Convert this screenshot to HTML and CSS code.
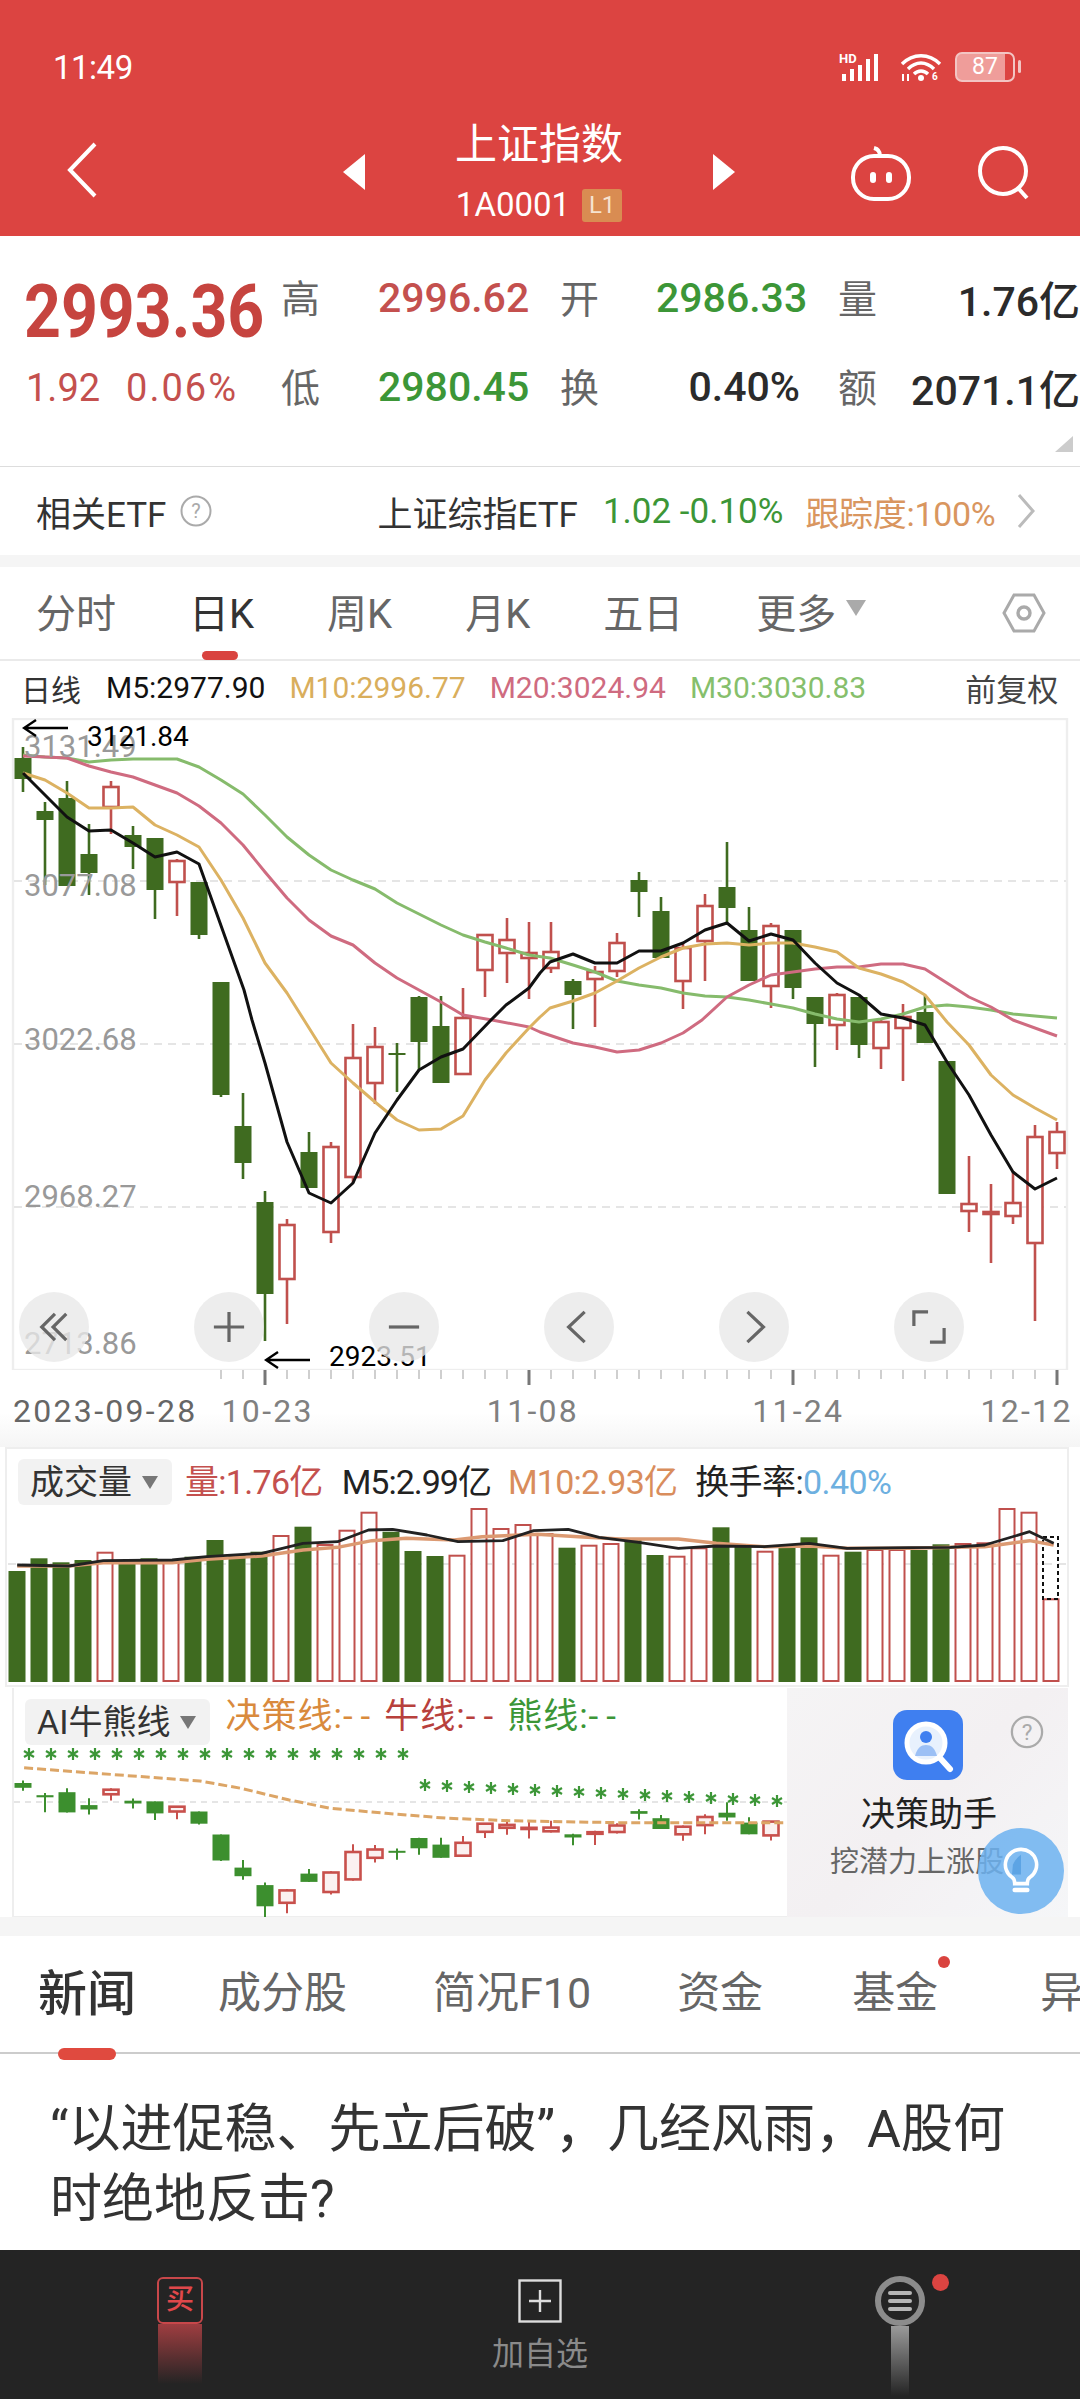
FILE: index.html
```html
<!DOCTYPE html>
<html lang="zh-CN">
<head>
<meta charset="utf-8">
<title>上证指数</title>
<link rel="stylesheet" href="styles.css">
</head>
<body>
<div class="page">
  <header class="hero">
    <div class="status">
      <span class="clock">11:49</span>
      <div class="status-icons">
        <svg class="sig" viewBox="0 0 48 30"><text x="0" y="11" class="hd">HD</text><rect x="3" y="22" width="4" height="7"/><rect x="11" y="17" width="4" height="12"/><rect x="19" y="13" width="4" height="16"/><rect x="27" y="7" width="4" height="22"/><rect x="35" y="2" width="4" height="27"/></svg>
        <svg class="wifi" viewBox="0 0 44 30"><path d="M3 12C14 1 30 1 41 12M9 17C17 9 27 9 35 17M15 22C19 18 25 18 29 22" fill="none" stroke="#fff" stroke-width="3.4"/><circle cx="22" cy="26" r="3" fill="#fff"/><text x="33" y="28" class="wifi-six">6</text><path d="M4 22v7M9 22v7" stroke="#fff" stroke-width="2"/></svg>
        <div class="batt"><span>87</span></div>
      </div>
    </div>
    <div class="titlebar">
      <svg class="back" viewBox="0 0 32 56"><path d="M29 2 4 28l25 26" fill="none" stroke="#fff" stroke-width="4"/></svg>
      <div class="stock-nav">
        <svg class="tri" viewBox="0 0 22 36"><path d="M22 0v36L0 18z" fill="#fff"/></svg>
        <div class="stock-name">
          <div class="stock-title">上证指数</div>
          <div class="stock-code">1A0001<span class="lv">L1</span></div>
        </div>
        <svg class="tri" viewBox="0 0 22 36"><path d="M0 0v36l22-18z" fill="#fff"/></svg>
      </div>
      <div class="top-actions">
        <svg class="robot" viewBox="0 0 62 58"><g fill="none" stroke="#fff" stroke-width="4"><rect x="3" y="13" width="56" height="43" rx="21"/><path d="M30 13C30 8 28 6 24 5"/></g><rect x="20" y="29" width="6" height="11" rx="3" fill="#fff"/><rect x="36" y="29" width="6" height="11" rx="3" fill="#fff"/></svg>
        <svg class="search" viewBox="0 0 54 54"><circle cx="25" cy="25" r="23" fill="none" stroke="#fff" stroke-width="4"/><path d="m40 42 9 10" stroke="#fff" stroke-width="4"/></svg>
      </div>
    </div>
  </header>

  <section class="quote">
    <div class="last-price"><span>2993.36</span></div>
    <span class="q-label">高</span><span class="q-val up">2996.62</span>
    <span class="q-label">开</span><span class="q-val down">2986.33</span>
    <span class="q-label">量</span><span class="q-val end">1.76亿</span>
    <div class="change"><span>1.92</span><span class="pct">0.06%</span></div>
    <span class="q-label">低</span><span class="q-val down">2980.45</span>
    <span class="q-label">换</span><span class="q-val flat">0.40%</span>
    <span class="q-label">额</span><span class="q-val end">2071.1亿</span>
    <svg class="corner" viewBox="0 0 18 16"><path d="M18 0v16H0z" fill="#ccc"/></svg>
  </section>

  <section class="etf">
    <span class="etf-label">相关ETF</span>
    <svg class="help" viewBox="0 0 32 32"><circle cx="16" cy="16" r="14.5" fill="none" stroke="#aaa" stroke-width="2"/><text x="16" y="23" class="help-q">?</text></svg>
    <span class="etf-name">上证综指ETF</span>
    <span class="etf-quote">1.02 -0.10%</span>
    <span class="etf-track">跟踪度:100%</span>
    <svg class="etf-more" viewBox="0 0 18 36"><path d="M2 2l14 16L2 34" fill="none" stroke="#bbb" stroke-width="3"/></svg>
  </section>

  <div class="band band-a"></div>

  <nav class="periods">
    <span>分时</span>
    <span class="on">日K</span>
    <span>周K</span>
    <span>月K</span>
    <span>五日</span>
    <span>更多</span>
    <svg class="more-tri" viewBox="0 0 20 16"><path d="M0 0h20L10 16z" fill="#aaa"/></svg>
    <svg class="hex" viewBox="0 0 44 40"><path d="M12 2h20l10 18-10 18H12L2 20z" fill="none" stroke="#aaa" stroke-width="3"/><circle cx="22" cy="20" r="6" fill="none" stroke="#aaa" stroke-width="3.4"/></svg>
  </nav>

  <div class="legend">
    <span class="lg-kind">日线</span>
    <span class="m5">M5:2977.90</span>
    <span class="m10">M10:2996.77</span>
    <span class="m20">M20:3024.94</span>
    <span class="m30">M30:3030.83</span>
    <span class="lg-adj">前复权</span>
  </div>

  <section class="kline">
    <svg id="kline" class="fill-svg" viewBox="0 718 1080 652"></svg>
    <span class="yl yl1">3131.49</span>
    <span class="yl yl2">3077.08</span>
    <span class="yl yl3">3022.68</span>
    <span class="yl yl4">2968.27</span>
    <span class="yl yl5">2713.86</span>
    <div class="mark mark-hi"><svg viewBox="0 0 46 20"><path d="M46 10H2M14 2 2 10l12 8" fill="none" stroke="#000" stroke-width="2.4"/></svg><span>3121.84</span></div>
    <div class="mark mark-lo"><svg viewBox="0 0 46 20"><path d="M46 10H2M14 2 2 10l12 8" fill="none" stroke="#000" stroke-width="2.4"/></svg><span>2923.51</span></div>
    <div class="zoom-btns">
      <button class="zb"><svg viewBox="0 0 36 36"><path d="M19 4 5 18l14 14M31 4 17 18l14 14" fill="none" stroke="#666" stroke-width="3.4"/></svg></button>
      <button class="zb"><svg viewBox="0 0 36 36"><path d="M2 18h32M18 2v32" fill="none" stroke="#666" stroke-width="3.4"/></svg></button>
      <button class="zb"><svg viewBox="0 0 36 36"><path d="M2 18h32" fill="none" stroke="#666" stroke-width="3.4"/></svg></button>
      <button class="zb"><svg viewBox="0 0 36 36"><path d="M24 2 7 18l17 16" fill="none" stroke="#666" stroke-width="3.4"/></svg></button>
      <button class="zb"><svg viewBox="0 0 36 36"><path d="m11 2 17 16-17 16" fill="none" stroke="#666" stroke-width="3.4"/></svg></button>
      <button class="zb"><svg viewBox="0 0 36 36"><path d="M17 2H2v15M34 19v15H19" fill="none" stroke="#666" stroke-width="3.4"/></svg></button>
    </div>
  </section>

  <div class="axis">
    <svg id="ticks" class="ticks" viewBox="0 0 1080 18"></svg>
    <div class="dates">
      <span class="d-start">2023-09-28</span>
      <span class="d-a">10-23</span>
      <span class="d-b">11-08</span>
      <span class="d-b">11-24</span>
      <span class="d-c">12-12</span>
    </div>
  </div>

  <section class="volume">
    <svg id="volume" class="fill-svg" viewBox="0 1447 1080 241"></svg>
    <div class="ind-head vol-head">
      <span class="chip">成交量<i class="chip-tri"></i></span>
      <span class="v-amt">量:1.76亿</span>
      <span class="v-m5">M5:2.99亿</span>
      <span class="v-m10">M10:2.93亿</span>
      <span class="v-rate">换手率:<b>0.40%</b></span>
    </div>
  </section>

  <section class="ai">
    <div class="ai-plot">
      <svg id="aiplot" class="fill-svg" viewBox="0 1688 787 229"></svg>
      <div class="ind-head ai-head">
        <span class="chip">AI牛熊线<i class="chip-tri"></i></span>
        <span class="a-dec">决策线:<span class="dash">--</span></span>
        <span class="a-bull">牛线:<span class="dash">--</span></span>
        <span class="a-bear">熊线:<span class="dash">--</span></span>
      </div>
    </div>
    <aside class="assist">
      <svg class="assist-help" viewBox="0 0 36 36"><circle cx="18" cy="18" r="16" fill="none" stroke="#aaa" stroke-width="2.4"/><text x="18" y="26" class="help-q2">?</text></svg>
      <svg class="assist-icon" viewBox="0 0 70 70"><rect width="70" height="70" rx="14" fill="#3f7ff0"/><circle cx="33" cy="33" r="19" fill="#e8f1fd" stroke="#fff" stroke-width="5"/><circle cx="33" cy="27" r="6" fill="#3f7ff0"/><path d="M22 46c2-8 6-11 11-11s9 3 11 11" fill="#9cc0f5"/><path d="m47 48 10 11" stroke="#fff" stroke-width="6" stroke-linecap="round"/></svg>
      <div class="assist-title">决策助手</div>
      <div class="assist-sub">挖潜力上涨股</div>
      <div class="bulb">
        <svg viewBox="0 0 40 54"><path d="M20 3a17 17 0 0 0-10 31c3 2 3 4 3 7h14c0-3 0-5 3-7A17 17 0 0 0 20 3z" fill="none" stroke="#fff" stroke-width="4"/><path d="M13 48h14" stroke="#fff" stroke-width="5" stroke-linecap="round"/><path d="M11 20c3-6 6-9 9-11v22H10z" fill="#3f90d8" opacity=".55"/></svg>
      </div>
    </aside>
  </section>

  <div class="band band-b"></div>

  <nav class="news-tabs">
    <span class="on">新闻</span>
    <span>成分股</span>
    <span>简况F10</span>
    <span>资金</span>
    <span class="dotted">基金</span>
    <span class="last-tab">异</span>
  </nav>

  <article class="story">“以进促稳、先立后破”，几经风雨，A股何时绝地反击?</article>

  <footer class="dock">
    <div class="dock-item buy">
      <div class="buy-box">买</div>
      <div class="buy-glow"></div>
    </div>
    <div class="dock-item add">
      <svg class="add-box" viewBox="0 0 44 44"><rect x="1.5" y="1.5" width="41" height="41" fill="none" stroke="#ddd" stroke-width="2.4"/><path d="M22 11v22M11 22h22" stroke="#ddd" stroke-width="2.4"/></svg>
      <span>加自选</span>
    </div>
    <div class="dock-item menu">
      <div class="menu-ring"><i></i><i></i><i></i></div>
      <div class="menu-glow"></div>
      <span class="menu-dot"></span>
    </div>
  </footer>
</div>
<script src="chart.js"></script>
</body>
</html>
```

FILE: styles.css
```css
* { box-sizing: border-box; }
html, body { margin: 0; padding: 0; }
body {
  width: 1080px;
  height: 2400px;
  overflow: hidden;
  background: #fff;
  color: #333;
  font-family: Roboto, "Noto Sans CJK SC", sans-serif;
}
.page { width: 1080px; height: 2400px; overflow: hidden; }
svg { display: block; }
.fill-svg { position: absolute; left: 0; top: 0; width: 100%; height: 100%; }

/* top bar */
.hero { height: 236px; background: #dc4441; color: #fff; }
.status { height: 100px; padding: 34px 65px 0 53px; display: flex; justify-content: space-between; align-items: center; }
.clock { font-size: 33px; letter-spacing: -.5px; }
.status-icons { display: flex; align-items: center; gap: 12px; }
.sig { width: 48px; height: 30px; fill: #fff; }
.hd { font: 700 13px Roboto, sans-serif; }
.wifi { width: 44px; height: 30px; }
.wifi-six { font: 700 10px Roboto, sans-serif; fill: #fff; }
.batt { width: 60px; height: 30px; border: 2.5px solid #f3c5c3; border-radius: 7px; background: linear-gradient(90deg, #ef9d9a 85%, transparent 85%); text-align: center; font-size: 23px; line-height: 25px; color: #fff; position: relative; }
.batt::after { content: ""; position: absolute; right: -8px; top: 6px; width: 3px; height: 13px; background: #f3c5c3; border-radius: 2px; }
.titlebar { height: 136px; display: grid; grid-template-columns: 343px 392px 1fr; align-items: start; }
.back { width: 32px; height: 56px; margin: 42px 0 0 66px; }
.stock-nav { display: flex; justify-content: space-between; align-items: flex-start; }
.tri { width: 22px; height: 36px; margin-top: 54px; }
.stock-name { display: flex; flex-direction: column; align-items: center; }
.stock-title { font-size: 42px; line-height: 60px; margin-top: 15px; }
.stock-code { font-size: 33px; line-height: 44px; margin-top: 8px; display: flex; align-items: center; }
.lv { width: 40px; height: 33px; margin-left: 12px; background: #d98c52; border-radius: 3px; font-size: 24px; line-height: 33px; text-align: center; color: #f6e3d0; }
.top-actions { display: flex; align-items: flex-start; gap: 66px; padding-left: 115px; }
.robot { width: 62px; height: 58px; margin-top: 43px; }
.search { width: 54px; height: 54px; margin-top: 46px; }

/* quote block */
.quote { position: relative; height: 231px; padding: 18px 0 0 26px; border-bottom: 1px solid #ddd; display: grid; grid-template-columns: 255px 97px 182px 96px 182px 60px 1fr; grid-auto-rows: 89px; align-items: center; }
.last-price { color: #c6443f; font-weight: 700; font-size: 74px; line-height: 80px; margin: 26px 0 0 -2px; white-space: nowrap; }
.last-price span { display: inline-block; transform: scaleX(.87); transform-origin: left center; }
.change { display: flex; gap: 26px; font-size: 38px; color: #c4504e; }
.pct { letter-spacing: 2px; }
.q-label { font-size: 39px; color: #666; margin-top: -5px; }
.q-val { font-size: 41px; font-weight: 500; white-space: nowrap; margin-top: -2px; }
.q-val.up { color: #c4504e; }
.q-val.down { color: #3c9637; }
.q-val.flat { color: #2b2b2b; text-align: right; padding-right: 38px; }
.q-val.end { color: #2b2b2b; text-align: right; }
.corner { position: absolute; right: 7px; bottom: 14px; width: 18px; height: 16px; }

/* related ETF strip */
.etf { height: 88px; display: flex; align-items: center; font-size: 35px; color: #333; padding-left: 36px; white-space: nowrap; }
.help { width: 32px; height: 32px; margin-left: 14px; }
.help-q { font: 20px Roboto, sans-serif; fill: #aaa; text-anchor: middle; }
.etf-name { margin-left: 165px; }
.etf-quote { margin-left: 25px; color: #3c9637; }
.etf-track { margin-left: 22px; color: #d9965f; font-size: 34px; letter-spacing: -.3px; }
.etf-more { width: 18px; height: 36px; margin-left: 22px; }

.band { background: #f5f5f5; }
.band-a { height: 12px; }
.band-b { height: 19px; }

/* period tabs */
.periods { height: 94px; display: flex; align-items: center; padding: 0 0 4px 36px; gap: 73px; font-size: 40px; color: #666; border-bottom: 2px solid #eaeaea; position: relative; }
.periods .on { color: #333; position: relative; }
.periods .on::after { content: ""; position: absolute; left: 13px; bottom: -20px; width: 36px; height: 9px; border-radius: 5px; background: #d9433f; }
.more-tri { width: 20px; height: 16px; margin: -6px 0 0 -63px; }
.hex { position: absolute; left: 1002px; top: 26px; width: 44px; height: 40px; }

/* moving average legend */
.legend { height: 57px; padding: 0 0 4px 21px; display: flex; align-items: center; font-size: 30px; white-space: nowrap; }
.lg-kind { color: #333; margin-right: 25px; }
.m5 { color: #111; margin-right: 24px; }
.m10 { color: #d9ae5c; margin-right: 24px; }
.m20 { color: #cf6b80; margin-right: 24px; }
.m30 { color: #86bf6c; margin-right: 99px; }
.lg-adj { color: #444; font-size: 31px; }

/* candle chart */
.kline { position: relative; height: 652px; }
.yl { position: absolute; left: 24px; font-size: 31px; line-height: 36px; color: #999; }
.yl1 { top: 11px; }
.yl2 { top: 150px; }
.yl3 { top: 304px; }
.yl4 { top: 461px; }
.yl5 { top: 608px; }
.mark { position: absolute; display: flex; align-items: flex-start; font-size: 28px; line-height: 34px; color: #000; }
.mark svg { width: 46px; height: 20px; }
.mark-hi { left: 22px; top: 0; gap: 19px; }
.mark-hi span { margin-top: 2px; }
.mark-lo { left: 264px; top: 632px; gap: 19px; }
.mark-lo span { margin-top: -10px; }
.zoom-btns { position: absolute; left: 19px; top: 574px; display: flex; gap: 105px; }
.zb { width: 70px; height: 70px; padding: 0; border: 0; border-radius: 50%; background: rgba(232,232,232,.78); display: flex; align-items: center; justify-content: center; }
.zb svg { width: 34px; height: 34px; }

/* time axis */
.axis { height: 77px; background: linear-gradient(#fff 55%, #f5f5f5); }
.ticks { width: 1080px; height: 18px; }
.dates { display: flex; padding-left: 13px; margin-top: 5px; font-size: 32px; line-height: 36px; letter-spacing: 2.3px; color: #808080; white-space: nowrap; }
.d-start { color: #666; }
.d-a { margin-left: 24px; }
.d-b { margin-left: 173px; }
.d-c { margin-left: 136px; }

/* volume and indicator panels */
.volume { position: relative; height: 241px; }
.ind-head { position: absolute; display: flex; align-items: center; font-size: 34px; line-height: 46px; white-space: nowrap; }
.vol-head { left: 18px; top: 12px; }
.chip { height: 46px; padding: 0 14px 0 12px; background: #f2f2f2; border-radius: 6px; color: #333; display: flex; align-items: center; }
.chip-tri { width: 0; height: 0; margin: 0 0 0 10px; border: 8px solid transparent; border-top: 13px solid #777; border-bottom: 0; }
.v-amt { margin-left: 13px; color: #c4504e; letter-spacing: -.7px; }
.v-m5 { margin-left: 19px; color: #222; letter-spacing: -1px; }
.v-m10 { margin-left: 17px; color: #d98d5c; letter-spacing: -.8px; }
.v-rate { margin-left: 18px; color: #222; letter-spacing: -.6px; }
.v-rate b { font-weight: 400; color: #6db0e0; }
.ai { height: 229px; display: flex; }
.ai-plot { position: relative; width: 787px; }
.ai-head { left: 25px; top: 11px; }
.a-dec, .a-bull, .a-bear { font-size: 35px; letter-spacing: 1px; transform: translateY(-5px); }
.dash { letter-spacing: 8px; }
.a-dec { margin-left: 15px; color: #d98a3d; }
.a-bull { margin-left: 6px; color: #b8403c; }
.a-bear { margin-left: 6px; color: #3c9637; }
.assist { position: relative; flex: 1; margin-right: 12px; background: linear-gradient(135deg, #f5f4f5, #f3f0f2 50%, #f5f6f8); display: flex; flex-direction: column; align-items: center; padding: 22px 0 0 3px; }
.assist-icon { width: 70px; height: 70px; margin-left: -2px; }
.assist-help { position: absolute; left: 223px; top: 27px; width: 34px; height: 34px; }
.help-q2 { font: 24px Roboto, sans-serif; fill: #aaa; text-anchor: middle; }
.assist-title { margin-top: 10px; font-size: 34px; line-height: 48px; color: #222; }
.assist-sub { margin: 4px 0 0 -24px; font-size: 29px; line-height: 40px; color: #666; white-space: nowrap; }
.bulb { position: absolute; left: 191px; top: 140px; width: 86px; height: 86px; border-radius: 50%; background: rgba(108,178,240,.85); display: flex; align-items: center; justify-content: center; }
.bulb svg { width: 36px; height: 50px; }

/* news tabs */
.news-tabs { height: 118px; display: flex; align-items: center; padding: 0 0 10px 38px; gap: 86px; font-size: 43px; color: #666; border-bottom: 2px solid #ccc; white-space: nowrap; }
.news-tabs .on { font-size: 49px; font-weight: 500; color: #333; position: relative; margin-right: -4px; }
.news-tabs .on::after { content: ""; position: absolute; left: 20px; bottom: -35px; width: 58px; height: 12px; border-radius: 6px; background: #e04a3f; }
.dotted { position: relative; margin-left: 3px; }
.dotted::after { content: ""; position: absolute; right: -12px; top: -2px; width: 12px; height: 12px; border-radius: 50%; background: #d9433f; }
.last-tab { margin-left: 16px; }

/* headline */
.story { height: 196px; padding: 41px 60px 0 50px; font-size: 52px; line-height: 70px; color: #333; }

/* bottom dock */
.dock { height: 149px; background: #242424; display: grid; grid-template-columns: 360px 360px 360px; }
.dock-item { position: relative; display: flex; flex-direction: column; align-items: center; }
.buy { padding: 27px 0 0 0; }
.buy-box { width: 46px; height: 47px; border: 2.5px solid #c8474a; border-radius: 6px; color: #e0484b; font-size: 28px; line-height: 41px; text-align: center; font-weight: 500; }
.buy-glow { width: 44px; height: 60px; background: linear-gradient(rgba(200,70,74,.75), rgba(200,70,74,0)); }
.add { padding-top: 29px; font-size: 32px; color: #8a8a8a; }
.add-box { width: 44px; height: 44px; }
.add span { margin-top: 9px; line-height: 44px; }
.menu { padding: 26px 0 0 0; }
.menu-ring { width: 50px; height: 50px; border: 6px solid #8c8c8c; border-radius: 50%; display: flex; flex-direction: column; align-items: center; justify-content: center; gap: 4px; }
.menu-ring i { width: 24px; height: 4px; border-radius: 2px; background: #b5b5b5; }
.menu-glow { width: 18px; height: 70px; background: linear-gradient(#9a9a9a, rgba(154,154,154,0)); }
.menu-dot { position: absolute; left: 212px; top: 24px; width: 17px; height: 17px; border-radius: 50%; background: #dc4441; }
```

FILE: chart.js
```js
// Daily K-line, volume and AI indicator panels, drawn from the series below.
var RED = '#c0504d', GREEN = '#3f6b20';

// [open-side flag, body top, body bottom, wick top, wick bottom] in page pixels
var candles = [
  ['g',758,779,747,792],['g',811,820,802,885],['g',798,886,781,886],['g',854,873,824,895],
  ['r',787,807,781,834],['g',835,847,826,869],['g',838,890,838,919],['r',861,882,859,916],
  ['g',882,935,882,939],['g',982,1095,982,1097],['g',1126,1163,1093,1179],['g',1202,1294,1191,1341],
  ['r',1225,1279,1219,1324],['g',1152,1188,1132,1188],['r',1147,1232,1142,1243],['r',1058,1177,1024,1183],
  ['r',1047,1083,1027,1104],['g',1053,1055,1043,1092],['g',997,1042,996,1070],['g',1026,1083,996,1083],
  ['r',1018,1074,988,1074],['r',935,970,935,997],['r',940,953,918,983],['r',953,958,922,999],
  ['r',952,968,922,973],['g',981,995,979,1029],['r',972,979,966,1027],['r',943,971,933,977],
  ['g',880,892,872,917],['g',911,958,897,958],['r',948,981,943,1009],['r',906,941,894,981],
  ['g',887,908,842,922],['g',930,981,907,981],['r',926,986,923,1008],['g',930,988,930,999],
  ['g',997,1024,997,1067],['r',995,1025,993,1050],['g',997,1045,997,1058],['r',1022,1048,1020,1069],
  ['r',1017,1028,1004,1081],['g',1012,1043,995,1043],['g',1061,1194,1061,1194],['r',1204,1211,1156,1232],
  ['r',1212,1214,1184,1263],['r',1203,1216,1171,1224],['r',1137,1243,1125,1321],['r',1132,1153,1122,1169]
];

var m5 = [[23,773],[67,817],[89,831],[111,830],[133,843],[155,857],[177,852],[199,864],[244,990],[252,1020],[265,1063],[287,1142],[309,1193],[331,1203],[353,1183],[375,1133],[397,1100],[419,1070],[441,1057],[463,1049],[491,1020],[506,1005],[529,988],[540,973],[550,962],[573,954],[595,963],[617,963],[639,951],[661,951],[683,943],[705,930],[727,923],[749,941],[771,934],[793,940],[815,963],[837,983],[859,995],[881,1014],[903,1018],[925,1025],[947,1062],[969,1095],[991,1135],[1013,1172],[1035,1189],[1057,1178]];
var m10 = [[23,773],[45,780],[67,793],[89,808],[111,808],[133,807],[155,825],[177,835],[199,847],[221,880],[243,918],[265,963],[287,993],[304,1020],[331,1063],[353,1083],[375,1102],[397,1120],[419,1130],[441,1129],[463,1116],[485,1080],[506,1053],[529,1028],[540,1017],[550,1008],[573,1001],[595,993],[617,981],[639,968],[661,957],[683,948],[705,944],[727,943],[749,945],[771,943],[793,943],[815,947],[837,952],[859,968],[881,974],[903,982],[925,995],[947,1022],[969,1045],[991,1075],[1013,1095],[1035,1108],[1057,1120]];
var m20 = [[23,756],[67,758],[89,766],[111,772],[133,777],[155,785],[177,793],[199,806],[221,823],[243,845],[265,872],[287,898],[309,920],[331,936],[353,945],[375,963],[397,978],[419,990],[441,1002],[463,1015],[492,1020],[529,1027],[540,1032],[573,1043],[595,1047],[617,1052],[639,1050],[661,1043],[683,1033],[702,1020],[727,997],[749,985],[771,975],[793,972],[815,969],[837,967],[859,967],[881,964],[903,964],[925,969],[947,983],[969,997],[991,1007],[1013,1020],[1057,1036]];
var m30 = [[23,755],[45,757],[67,758],[89,762],[111,760],[133,759],[155,759],[177,759],[199,767],[221,780],[243,794],[265,815],[287,837],[309,855],[331,870],[353,880],[375,889],[397,903],[419,914],[441,925],[463,935],[485,942],[506,948],[529,955],[550,958],[573,965],[595,972],[617,981],[639,985],[661,988],[683,993],[705,996],[727,997],[749,1000],[771,1004],[793,1008],[815,1014],[837,1019],[859,1022],[881,1019],[903,1014],[925,1007],[947,1005],[969,1007],[991,1010],[1013,1014],[1035,1016],[1057,1018]];

function line(points, color, width, dash) {
  var d = points.map(function (p) { return p[0] + ',' + p[1]; }).join(' ');
  return '<polyline points="' + d + '" fill="none" stroke="' + color + '" stroke-width="' + width +
    '" stroke-linejoin="round"' + (dash ? ' stroke-dasharray="' + dash + '"' : '') + '/>';
}

function candle(x, c, map, up, down, hollow, wickW) {
  var col = c[0] === 'r' ? up : down;
  var top = map(c[1]), bottom = map(c[2]);
  var out = '<line x1="' + x + '" x2="' + x + '" y1="' + map(c[3]) + '" y2="' + map(c[4]) +
    '" stroke="' + col + '" stroke-width="' + wickW + '"/>';
  if (c[0] === 'r') {
    out += '<rect x="' + (x - 7.5) + '" y="' + top + '" width="15" height="' + Math.max(bottom - top, 1) +
      '" fill="' + hollow + '" stroke="' + col + '" stroke-width="2.6"/>';
  } else {
    out += '<rect x="' + (x - 8.5) + '" y="' + top + '" width="17" height="' + Math.max(bottom - top, 2) +
      '" fill="' + col + '"/>';
  }
  return out;
}

function same(y) { return y; }

// main price chart
var k = '<rect x="13" y="719" width="1054" height="651" fill="none" stroke="#eee" stroke-width="2.4"/>';
[881, 1044, 1207].forEach(function (y) {
  k += '<line x1="14" x2="1066" y1="' + y + '" y2="' + y + '" stroke="#ddd" stroke-width="1.4" stroke-dasharray="8 6"/>';
});
candles.forEach(function (c, i) { k += candle(23 + 22 * i, c, same, RED, GREEN, '#fff', 2.6); });
k += line(m30, '#86bb6c', 3) + line(m20, '#cf6b80', 3) + line(m10, '#dcb262', 3) + line(m5, '#111', 3);
document.getElementById('kline').innerHTML = k;

// tick marks under the price chart
var t = '';
for (var i = 9; i < 48; i++) {
  var x = 23 + 22 * i, major = i === 11 || i === 23 || i === 35 || i === 47;
  t += '<line x1="' + x + '" x2="' + x + '" y1="0" y2="' + (major ? 15 : 9) + '" stroke="' + (major ? '#777' : '#bbb') +
    '" stroke-width="' + (major ? 3 : 1.4) + '"/>';
}
document.getElementById('ticks').innerHTML = t;

// volume bars, tops given in page pixels
var vol = [
  ['g',393],['g',355],['g',367],['g',360],['r',338],['g',360],['g',355],['r',362],['g',350],['g',300],
  ['g',345],['g',335],['r',288],['g',260],['r',315],['r',272],['r',218],['g',275],['g',333],['g',348],
  ['r',347],['r',207],['r',267],['r',255],['r',282],['g',323],['r',317],['r',312],['g',300],['g',345],
  ['r',350],['r',325],['g',262],['g',320],['r',335],['g',318],['g',292],['r',347],['g',335],['r',330],
  ['r',330],['g',330],['g',313],['r',312],['r',310],['r',207],['r',218],['r',478]
];
var volM5 = [[25,375],[100,378],[150,362],[250,360],[300,350],[380,340],[440,310],[490,305],[535,270],[570,268],[620,285],[665,305],[730,302],[775,272],[825,268],[870,292],[930,308],[985,325],[1040,318],[1110,320],[1175,310],[1230,325],[1320,323],[1380,322],[1430,315],[1495,275],[1530,310]];
var volM10 = [[25,378],[100,378],[150,368],[250,368],[300,358],[380,348],[440,330],[490,322],[540,302],[590,295],[660,300],[700,290],[780,283],[840,290],[900,297],[985,297],[1040,310],[1110,320],[1175,318],[1230,325],[1320,325],[1380,322],[1430,320],[1495,302],[1530,315]];
function volPoint(p) { return [+(p[0] / 1.452).toFixed(1), +(1440 + p[1] / 3).toFixed(1)]; }

var v = '<rect x="6" y="1448" width="1062" height="238" fill="none" stroke="#eee" stroke-width="2"/>' +
  '<line x1="8" x2="1066" y1="1564" y2="1564" stroke="#ddd" stroke-width="1.4" stroke-dasharray="8 6"/>';
vol.forEach(function (b, i) {
  var x = 17 + 22 * i, top = +(1440 + b[1] / 3).toFixed(1);
  if (b[0] === 'g') {
    v += '<rect x="' + (x - 8.5) + '" y="' + top + '" width="17" height="' + (1682 - top) + '" fill="' + GREEN + '"/>';
  } else {
    v += '<rect x="' + (x - 7.5) + '" y="' + top + '" width="15" height="' + (1681 - top) + '" fill="#fff" stroke="' + RED + '" stroke-width="2"/>';
  }
});
v += '<rect x="1043" y="1537" width="15" height="62" fill="none" stroke="#111" stroke-width="2" stroke-dasharray="4 3"/>';
v += line(volM10.map(volPoint), '#dc9a72', 3.4) + line(volM5.map(volPoint), '#222', 2.8);
document.getElementById('volume').innerHTML = v;

// AI indicator: same candles at a smaller scale, with signal marks and the decision line
function mini(y) { return +(1783 + (y - 758) * 0.23).toFixed(1); }
function signal(x, y) {
  return '<path d="M' + x + ' ' + (y - 6) + 'v12M' + (x - 5) + ' ' + (y - 3) + 'l10 6M' + (x - 5) + ' ' + (y + 3) + 'l10 -6" stroke="#3c9637" stroke-width="2.2" fill="none"/>';
}
var a = '<path d="M13 1688V1917H787" fill="none" stroke="#eee" stroke-width="2"/>' +
  '<line x1="14" x2="787" y1="1802" y2="1802" stroke="#ddd" stroke-width="1.4" stroke-dasharray="6 5"/>';
for (var s = 0; s < 18; s++) { a += signal(29 + 22 * s, 1754); }
for (var r = 0; r < 17; r++) { a += signal(425 + 22 * r, 1785 + r); }
candles.slice(0, 35).forEach(function (c, i) { a += candle(23 + 22 * i, c, mini, '#c8504c', '#3c8f2e', '#fbf1f1', 2); });
var decision = [[35,983],[140,1000],[290,1023],[350,1045],[420,1080],[480,1105],[560,1120],[650,1135],[740,1142],[900,1148],[1000,1148],[1140,1148]];
a += line(decision.map(volPoint), '#dca566', 3, '9 4');
document.getElementById('aiplot').innerHTML = a;
```
